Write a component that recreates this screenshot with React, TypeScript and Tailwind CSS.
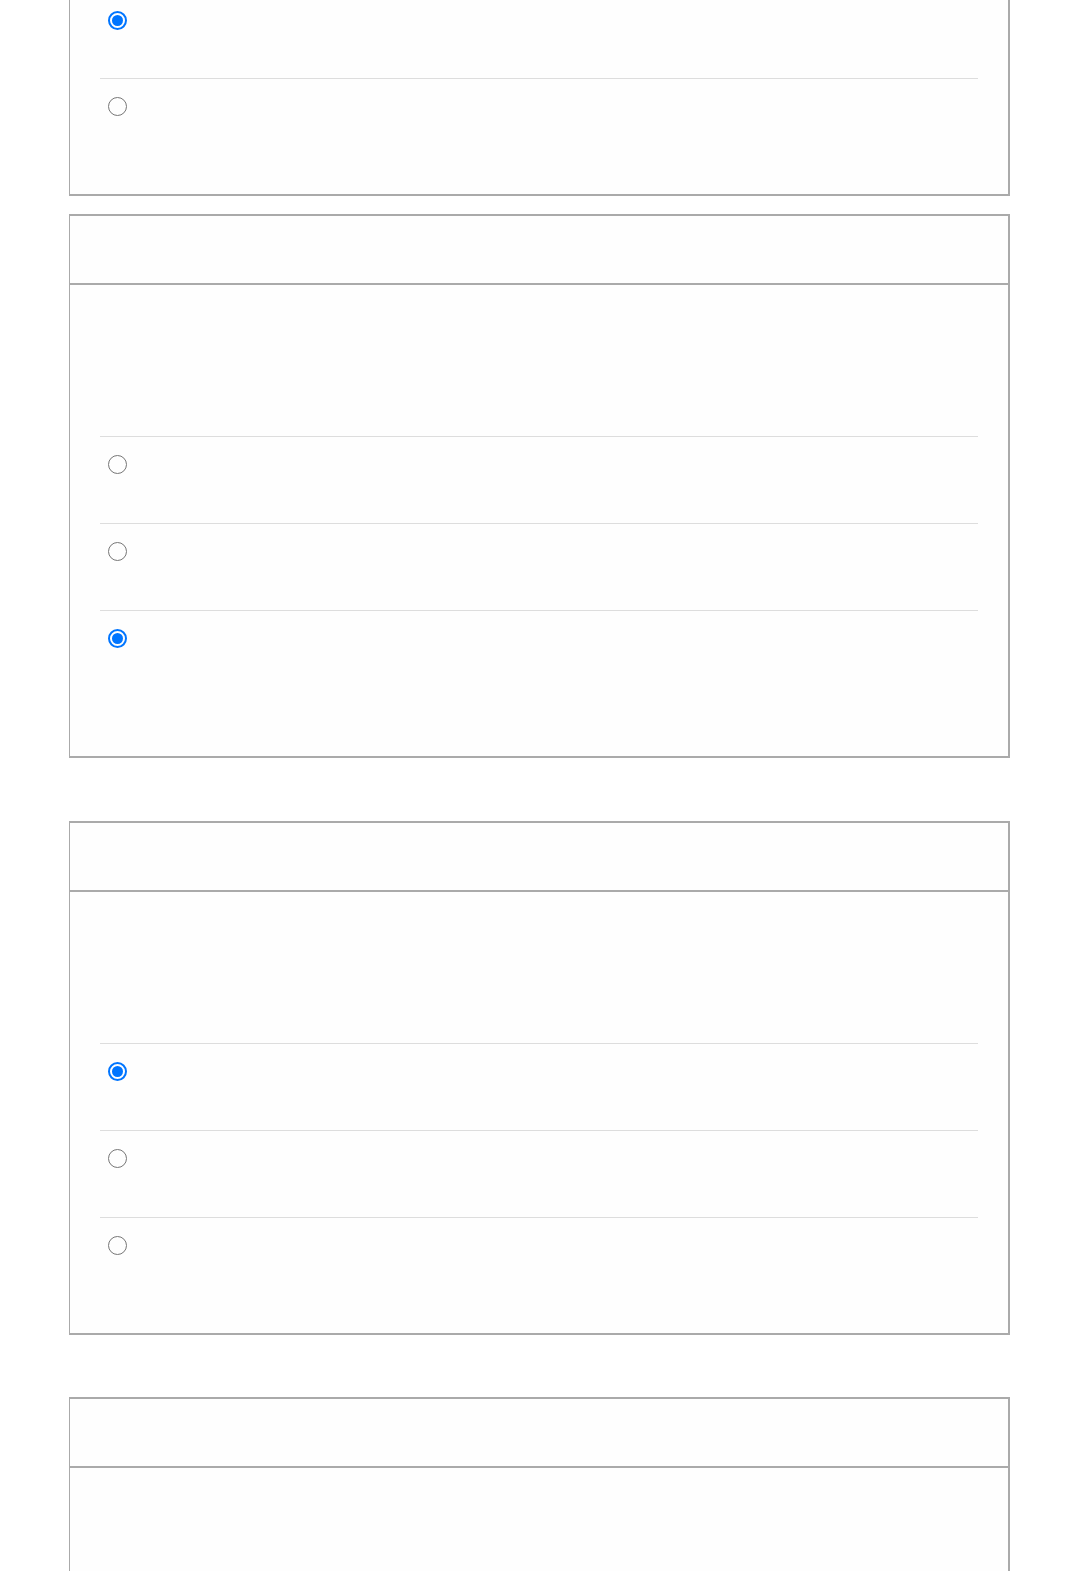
const Radio = ({ checked }: { checked?: boolean }) => {
  if (checked) {
    return (
      <div className="w-[19px] h-[19px] rounded-full border-2 border-[#0075ff] flex items-center justify-center">
        <div className="w-[11px] h-[11px] rounded-full bg-[#0075ff]" />
      </div>
    );
  }
  return <div className="w-[19px] h-[19px] rounded-full border-[1.5px] border-[#767676]" />;
};

const Option = ({ checked, first, tall }: { checked?: boolean; first?: boolean; tall?: boolean }) => (
  <div
    className={
      (first ? "pt-[20px] " : "border-t border-[#dddddd] pt-[18px] ") +
      (tall ? "h-[116px] " : "h-[87px] ") +
      "pl-[8px]"
    }
  >
    <Radio checked={checked} />
  </div>
);

const Card = ({ children, pb }: { children: React.ReactNode; pb?: string }) => (
  <div className="border-l border-r-2 border-t-2 border-b-2 border-[#aaaaaa] bg-[#fefefe]">
    <div className="h-[67px]" />
    <div className={"border-t-2 border-[#aaaaaa] px-[30px] " + (pb ?? "pb-[30px]")}>
      <div className="h-[151px]" />
      {children}
    </div>
  </div>
);

export default function App() {
  return (
    <div className="bg-white font-['Liberation_Sans',sans-serif] overflow-hidden h-[1571px]">
      <div className="w-[941px] ml-[69px]">
        {/* first card, top scrolled out of view */}
        <div className="-mt-[9px] border-l border-r-2 border-b-2 border-[#aaaaaa] bg-[#fefefe] px-[30px] pb-[29px]">
          <Option checked first />
          <Option />
        </div>

        <div className="mt-[18px]">
          <Card>
            <Option />
            <Option />
            <Option checked tall />
          </Card>
        </div>

        <div className="mt-[63px]">
          <Card pb="pb-[29px]">
            <Option checked />
            <Option />
            <Option />
          </Card>
        </div>

        <div className="mt-[62px]">
          <Card>
            <Option />
            <Option />
          </Card>
        </div>
      </div>
    </div>
  );
}
